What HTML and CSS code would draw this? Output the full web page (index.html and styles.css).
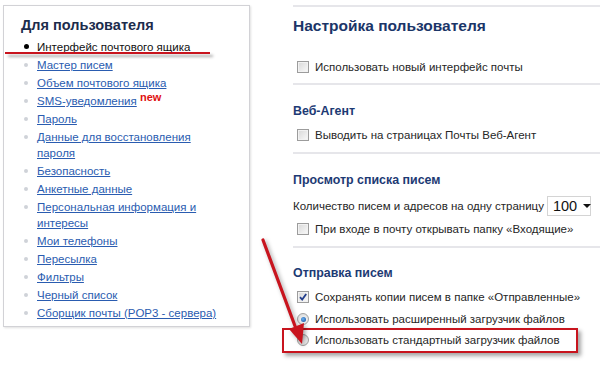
FILE: index.html
```html
<!DOCTYPE html>
<html lang="ru">
<head>
<meta charset="utf-8">
<title>Настройка пользователя</title>
<link rel="stylesheet" href="styles.css">
</head>
<body>
<div class="page">
  <aside class="side">
    <h2 class="side-title">Для пользователя</h2>
    <ul class="menu">
      <li class="menu-item current">Интерфейс почтового ящика<span class="mark-line"></span></li>
      <li class="menu-item"><a href="#">Мастер писем</a></li>
      <li class="menu-item"><a href="#">Объем почтового ящика</a></li>
      <li class="menu-item"><a href="#">SMS-уведомления</a> <sup class="new">new</sup></li>
      <li class="menu-item"><a href="#">Пароль</a></li>
      <li class="menu-item"><a href="#">Данные для восстановления пароля</a></li>
      <li class="menu-item"><a href="#">Безопасность</a></li>
      <li class="menu-item"><a href="#">Анкетные данные</a></li>
      <li class="menu-item"><a href="#">Персональная информация и интересы</a></li>
      <li class="menu-item"><a href="#">Мои телефоны</a></li>
      <li class="menu-item"><a href="#">Пересылка</a></li>
      <li class="menu-item"><a href="#">Фильтры</a></li>
      <li class="menu-item"><a href="#">Черный список</a></li>
      <li class="menu-item"><a href="#">Сборщик почты (POP3 - сервера)</a></li>
    </ul>
  </aside>

  <main class="main">
    <section class="section s1">
      <h1 class="main-title">Настройка пользователя</h1>
      <div class="row opt"><span class="cb"></span>Использовать новый интерфейс почты</div>
    </section>
    <section class="section s2">
      <h2 class="sec-title">Веб-Агент</h2>
      <div class="row opt"><span class="cb"></span>Выводить на страницах Почты Веб-Агент</div>
    </section>
    <section class="section s3">
      <h2 class="sec-title">Просмотр списка писем</h2>
      <div class="row count">Количество писем и адресов на одну страницу <span class="select"><span class="select-val">100</span><span class="select-arrow"></span></span></div>
      <div class="row opt"><span class="cb"></span>При входе в почту открывать папку «Входящие»</div>
    </section>
    <section class="section s4">
      <h2 class="sec-title">Отправка писем</h2>
      <div class="row opt"><span class="cb checked"><svg viewBox="0 0 12 12" width="12" height="12"><path d="M3 6.2 L5.2 8.6 L9.2 3" fill="none" stroke="#243f8c" stroke-width="1.8"/></svg></span>Сохранять копии писем в папке «Отправленные»</div>
      <div class="row opt r2"><span class="rb on"></span>Использовать расширенный загрузчик файлов</div>
      <div class="row opt r3"><span class="rb"></span>Использовать стандартный загрузчик файлов<span class="highlight"></span></div>
    </section>
  </main>

  <svg class="arrow" width="600" height="368" viewBox="0 0 600 368">
    <line x1="263" y1="240" x2="295" y2="326" stroke="#c8141e" stroke-width="3.2" stroke-linecap="round"/>
    <polygon points="302,344 289,329 304,323" fill="#c8141e"/>
  </svg>
</div>
</body>
</html>
```

FILE: styles.css
```css
* { box-sizing: border-box; }
html, body { margin: 0; padding: 0; background: #fff; }
body {
  font-family: "Liberation Sans", Arial, sans-serif;
  font-size: 11.5px;
  color: #262626;
  width: 600px;
  height: 368px;
  overflow: hidden;
}
.page {
  position: relative;
  display: flex;
  align-items: flex-start;
  padding-top: 5px;
  height: 368px;
}

/* left panel */
.side {
  flex: none;
  margin-left: 3px;
  width: 247px;
  height: 322px;
  border: 1px solid #d2d2d6;
  box-shadow: 1px 1px 2px rgba(0,0,0,0.12);
  padding: 9px 24px 0 17px;
}
.side-title {
  margin: 0;
  font-size: 14.5px;
  line-height: 20px;
  font-weight: bold;
  color: #1c2c4c;
}
.menu {
  list-style: none;
  margin: 4px 0 0;
  padding: 0;
}
.menu-item {
  position: relative;
  padding-left: 16px;
  line-height: 16px;
  margin-bottom: 2px;
}
.menu-item::before {
  content: "";
  position: absolute;
  left: 3px;
  top: 6px;
  width: 4px;
  height: 4px;
  border-radius: 50%;
  background: #cfd2d8;
}
.menu-item a {
  color: #2a5cb0;
  text-decoration: underline;
}
.menu-item.current { color: #111; }
.menu-item.current::before {
  background: #000;
  width: 5px;
  height: 5px;
  top: 5px;
  left: 3px;
}
.mark-line {
  position: absolute;
  left: -16px;
  top: 13px;
  width: 205px;
  height: 2px;
  background: #c8141e;
  box-shadow: 3px 3px 3px rgba(0,0,0,0.35);
}
.new {
  color: #e01010;
  font-weight: bold;
  font-size: 11px;
  vertical-align: 4px;
  line-height: 0;
}

/* main column */
.main {
  flex: none;
  margin-left: 43px;
  width: 307px;
}
.section {
  border-top: 2px solid #e6e6ea;
}
.s1 { padding: 9px 0 7px; }
.s2 { padding: 17px 0 8px; }
.s3 { padding: 17px 0 8px; }
.s4 { padding: 16px 0 11px; }
.main-title {
  margin: 0 0 22px;
  font-size: 15.5px;
  line-height: 20px;
  font-weight: bold;
  color: #1b3568;
}
.sec-title {
  margin: 0 0 6px;
  font-size: 12.4px;
  line-height: 18px;
  font-weight: bold;
  color: #1d3a74;
}
.s3 .sec-title { margin-bottom: 7px; }
.row {
  display: flex;
  align-items: center;
  height: 18px;
  line-height: 18px;
  white-space: nowrap;
}
.opt { padding-left: 4px; }
.row + .row { margin-top: 4px; }
.r3 { margin-top: 3px !important; position: relative; }
.count { height: 20px; }
.cb {
  display: inline-block;
  width: 12px;
  height: 12px;
  margin-right: 6px;
  border: 1px solid #9c9c9c;
  background: linear-gradient(135deg, #d8d8d8, #fafafa);
  box-shadow: inset 0 0 0 1px #f2f2f2;
  flex: none;
}
.cb svg { display: block; margin: -1px 0 0 -1px; }
.rb {
  display: inline-block;
  width: 12px;
  height: 12px;
  margin-right: 6px;
  border-radius: 50%;
  border: 1px solid #a2a2a2;
  background: radial-gradient(circle at 60% 60%, #fafafa, #d2d2d2);
  flex: none;
  position: relative;
}
.rb.on::after {
  content: "";
  position: absolute;
  left: 2.5px;
  top: 2.5px;
  width: 5px;
  height: 5px;
  border-radius: 50%;
  background: radial-gradient(circle at 40% 40%, #6ab0f0, #0d4a9a);
}
.select {
  display: inline-flex;
  align-items: center;
  margin-left: 3px;
  width: 44px;
  height: 20px;
  border: 1px solid #d4d4d4;
  padding-left: 5px;
  color: #111;
}
.select-val { font-size: 14.5px; line-height: 18px; }
.select-arrow {
  margin-left: 6px;
  width: 0;
  height: 0;
  border-left: 4px solid transparent;
  border-right: 4px solid transparent;
  border-top: 4px solid #111;
}
.highlight {
  position: absolute;
  left: -11px;
  top: -3px;
  width: 296px;
  height: 25px;
  border: 2px solid #c8141e;
  box-shadow: 3px 3px 4px rgba(0,0,0,0.35);
  pointer-events: none;
}
.arrow {
  position: absolute;
  left: 0;
  top: 0;
  pointer-events: none;
  filter: drop-shadow(2px 2px 2px rgba(0,0,0,0.35));
}
```
